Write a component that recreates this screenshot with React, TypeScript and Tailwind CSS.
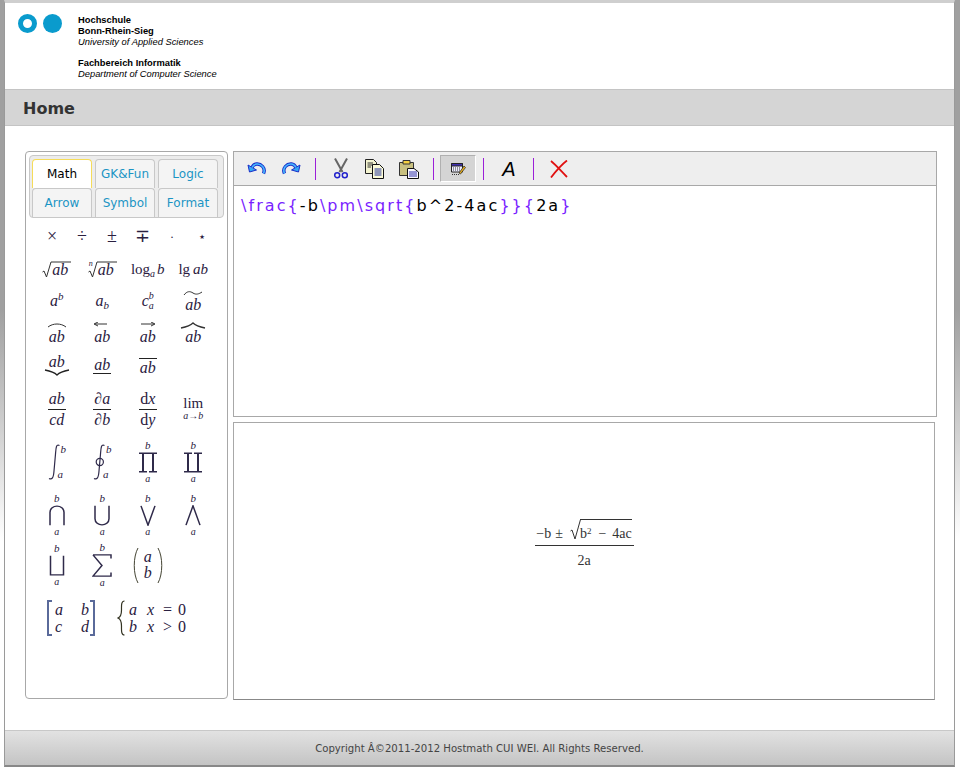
import type { ReactNode } from "react";

const serif = "font-['Liberation_Serif',serif]";

function Tab({ label, active }: { label: string; active?: boolean }) {
  return (
    <div
      className={[
        "h-[29px] rounded-t-[4px] border border-b-0 flex items-center justify-center text-[12px]",
        active ? "bg-white border-[#f5dc5a] text-black" : "bg-[#f4f4f4] border-[#c8c8c8] text-[#1c94c4]",
      ].join(" ")}
    >
      {label}
    </div>
  );
}

function Sep() {
  return <div className="w-px h-[22px] bg-[#9b1fd8] ml-[7px] mr-[8px] shrink-0" />;
}

function Cell({ children, className = "" }: { children: ReactNode; className?: string }) {
  return <div className={`flex items-center justify-center text-[#2a2040] ${serif} ${className}`}>{children}</div>;
}

function Var({ children, className = "" }: { children: ReactNode; className?: string }) {
  return <i className={className}>{children}</i>;
}

function Frac({ top, bottom }: { top: ReactNode; bottom: ReactNode }) {
  return (
    <div className="flex flex-col items-center text-[16px] leading-[16px] mt-[2px]">
      <div className="pb-[2px]">{top}</div>
      <div className="w-[18px] border-t border-[#222]" />
      <div className="pt-[2px]">{bottom}</div>
    </div>
  );
}

// big operator with limits above and below
function BigOp({ children }: { children: ReactNode }) {
  return (
    <div className="flex flex-col items-center">
      <i className="text-[11px] leading-[11px] mb-[1px]">b</i>
      {children}
      <i className="text-[10px] leading-[10px] mt-[1px]">a</i>
    </div>
  );
}

function OpSvg({ d, w = 18, h = 21, sw = 1.5 }: { d: string; w?: number; h?: number; sw?: number }) {
  return (
    <svg width={w} height={h} viewBox={`0 0 ${w} 26`} preserveAspectRatio="none" fill="none" stroke="#2f2a4a" strokeWidth={sw}>
      <path d={d} />
    </svg>
  );
}

function Radical({ w }: { w: number }) {
  return (
    <svg width={w} height="17" viewBox={`0 0 ${w} 17`} fill="none" stroke="#333" strokeWidth="1" className="shrink-0">
      <path d={`M0.5 11 L2 10 L4.5 16 L9 1 L${w} 1`} />
    </svg>
  );
}

function Accent({ d, w = 20, sw = 1 }: { d: string; w?: number; sw?: number }) {
  return (
    <div className="flex flex-col items-center">
      <svg width={w} height="7" viewBox={`0 0 ${w} 7`} fill="none" stroke="#333" strokeWidth={sw}>
        <path d={d} />
      </svg>
      <i className="leading-[15px] text-[16px]">ab</i>
    </div>
  );
}

function Integral({ contour }: { contour?: boolean }) {
  return (
    <div className="flex items-start h-[36px]">
      <svg width="13" height="36" viewBox="0 0 13 36" fill="none" stroke="#2f2a4a" strokeWidth="1.2">
        <path d="M11.5 1.5 C8 0 8 4 7.5 10 L6 27 C5.5 34 4 36 1 34.5" />
        {contour && <circle cx="6.8" cy="18" r="3.6" />}
      </svg>
      <div className="flex flex-col justify-between h-[36px] text-[11px] leading-[11px] italic">
        <span>b</span>
        <span className="-ml-[3px]">a</span>
      </div>
    </div>
  );
}

function Symbols() {
  return (
    <div className="flex flex-col">
      {/* operators */}
      <div className="grid grid-cols-[repeat(6,30px)] h-[22px] ml-[8px] mt-[5px] text-[18px]">
        {["×", "÷", "±", "∓"].map(s => (
          <Cell key={s}>{s}</Cell>
        ))}
        <Cell className="text-[12px]">·</Cell>
        <Cell className="text-[13px]">⋆</Cell>
      </div>

      <div className="grid grid-cols-[repeat(4,45.5px)] ml-[5px] mt-[8px] text-[16px] auto-rows-[32px]">
        <Cell>
          <div className="relative flex items-end">
            <Radical w={29} />
            <Var className="absolute left-[10px] top-[1px] text-[16px] leading-[16px]">ab</Var>
          </div>
        </Cell>
        <Cell>
          <div className="relative flex items-end">
            <Radical w={29} />
            <Var className="absolute left-[1px] -top-[1px] text-[8px] leading-[8px]">n</Var>
            <Var className="absolute left-[10px] top-[1px] text-[16px] leading-[16px]">ab</Var>
          </div>
        </Cell>
        <Cell className="text-[15px]">
          log<Var className="text-[10px] relative top-[4px]">a</Var>
          <Var className="ml-[2px]">b</Var>
        </Cell>
        <Cell className="text-[15px]">
          lg<Var className="ml-[3px]">ab</Var>
        </Cell>

        <Cell>
          <Var>a</Var>
          <Var className="text-[11px] relative -top-[5px]">b</Var>
        </Cell>
        <Cell>
          <Var>a</Var>
          <Var className="text-[11px] relative top-[4px]">b</Var>
        </Cell>
        <Cell>
          <Var>c</Var>
          <div className="flex flex-col text-[10px] leading-[10px] italic">
            <span>b</span>
            <span>a</span>
          </div>
        </Cell>
        <Cell>
          <Accent d="M1 5 C4 1 7 1 10 3 C13 5 16 4 19 2" />
        </Cell>

        <Cell>
          <Accent d="M1 5 C6 1 14 1 19 5" />
        </Cell>
        <Cell>
          <Accent d="M15 2 L3 2 M6 0 L2 2 L6 4" />
        </Cell>
        <Cell>
          <Accent d="M3 2 L16 2 M13 0 L17 2 L13 4" />
        </Cell>
        <Cell>
          <Accent w={26} d="M1 6 C6 5 10 4 13 1 C16 4 20 5 25 6" sw={1.4} />
        </Cell>

        <Cell>
          <div className="flex flex-col items-center">
            <Var className="leading-[14px]">ab</Var>
            <svg width="26" height="7" viewBox="0 0 26 7" fill="none" stroke="#222" strokeWidth="1.3">
              <path d="M1 1 C6 2 10 3 13 6 C16 3 20 2 25 1" />
            </svg>
          </div>
        </Cell>
        <Cell>
          <div className="border-b border-[#222] leading-[15px] px-[1px] pb-[1px]">
            <Var>ab</Var>
          </div>
        </Cell>
        <Cell>
          <div className="border-t border-[#222] leading-[15px] px-[1px] pt-[1px] mt-[2px]">
            <Var>ab</Var>
          </div>
        </Cell>
        <div />
      </div>

      <div className="grid grid-cols-[repeat(4,45.5px)] grid-rows-[54px_54px_52px_48px] ml-[5px]">
        <Cell>
          <Frac top={<Var>ab</Var>} bottom={<Var>cd</Var>} />
        </Cell>
        <Cell>
          <Frac top={<Var>∂a</Var>} bottom={<Var>∂b</Var>} />
        </Cell>
        <Cell>
          <Frac
            top={
              <span>
                d<Var>x</Var>
              </span>
            }
            bottom={
              <span>
                d<Var>y</Var>
              </span>
            }
          />
        </Cell>
        <Cell>
          <div className="flex flex-col items-center text-[15px] leading-[15px]">
            <span>lim</span>
            <Var className="text-[10px] leading-[10px]">a→b</Var>
          </div>
        </Cell>

        <Cell>
          <Integral />
        </Cell>
        <Cell>
          <Integral contour />
        </Cell>
        <Cell>
          <BigOp>
            <OpSvg sw={2} d="M0 1.5 L18 1.5 M4 2 L4 24 M14 2 L14 24 M0 24.5 L8 24.5 M10 24.5 L18 24.5" />
          </BigOp>
        </Cell>
        <Cell>
          <BigOp>
            <OpSvg sw={2} d="M0 24.5 L18 24.5 M4 2 L4 24 M14 2 L14 24 M0 1.5 L8 1.5 M10 1.5 L18 1.5" />
          </BigOp>
        </Cell>

        <Cell>
          <BigOp>
            <OpSvg d="M2 25 L2 9 C2 -1 16 -1 16 9 L16 25" />
          </BigOp>
        </Cell>
        <Cell>
          <BigOp>
            <OpSvg d="M2 1 L2 17 C2 27 16 27 16 17 L16 1" />
          </BigOp>
        </Cell>
        <Cell>
          <BigOp>
            <OpSvg d="M2 1 L9 25 L16 1" />
          </BigOp>
        </Cell>
        <Cell>
          <BigOp>
            <OpSvg d="M2 25 L9 1 L16 25" />
          </BigOp>
        </Cell>

        <Cell>
          <BigOp>
            <OpSvg w={16} d="M1.5 1 L1.5 24.5 L14.5 24.5 L14.5 1" />
          </BigOp>
        </Cell>
        <Cell>
          <BigOp>
            <OpSvg w={20} h={23} d="M1 1 L19 1 L19 5 M1 1 L10 13 L1 25 L19 25 L19 21" />
          </BigOp>
        </Cell>
        <Cell>
          <svg width="7" height="37" viewBox="0 0 7 37" fill="none" stroke="#443" strokeWidth="1">
            <path d="M6 1 C1 10 1 27 6 36" />
          </svg>
          <div className="flex flex-col items-center gap-[2px] text-[16px] leading-[14px] mx-[5px] italic">
            <span>a</span>
            <span>b</span>
          </div>
          <svg width="7" height="37" viewBox="0 0 7 37" fill="none" stroke="#443" strokeWidth="1">
            <path d="M1 1 C6 10 6 27 1 36" />
          </svg>
        </Cell>
        <div />
      </div>

      {/* matrix + cases */}
      <div className="flex items-center ml-[18px] mt-[11px] text-[#2a2040] text-[16px]">
        <div className={`flex items-center ${serif}`}>
          <div className="w-[5px] h-[36px] border-2 border-r-0 border-[#5a6a9a]" />
          <div className="grid grid-cols-[8px_8px] gap-x-[18px] gap-y-[3px] leading-[14px] italic pl-[3px] pr-[1px]">
            <span>a</span>
            <span>b</span>
            <span>c</span>
            <span>d</span>
          </div>
          <div className="w-[5px] h-[36px] border-2 border-l-0 border-[#5a6a9a]" />
        </div>
        <div className={`flex items-center ml-[22px] ${serif}`}>
          <svg width="8" height="36" viewBox="0 0 8 36" fill="none" stroke="#332" strokeWidth="1.2" className="shrink-0">
            <path d="M7.5 1 C4 1 4.5 6 4.5 10 C4.5 15 3.5 17 1 18 C3.5 19 4.5 21 4.5 26 C4.5 30 4 35 7.5 35" />
          </svg>
          <div className="grid grid-cols-[18px_10px_21px_6px] gap-y-[3px] leading-[14px] ml-[4px]">
            <i>a</i>
            <i>x</i>
            <span className="text-center">=</span>
            <span>0</span>
            <i>b</i>
            <i>x</i>
            <span className="text-center">&gt;</span>
            <span>0</span>
          </div>
        </div>
      </div>
    </div>
  );
}

function ToolButton({ children, className = "" }: { children: ReactNode; className?: string }) {
  return <button className={`w-[34px] h-[28px] flex items-center justify-center shrink-0 ${className}`}>{children}</button>;
}

function Toolbar() {
  return (
    <div className="h-[34px] bg-[#eeeeee] border-b border-[#a8a8a8] flex items-center pl-[6px] shrink-0">
      <ToolButton>
        <svg width="20" height="15" viewBox="0 0 20 15" fill="none">
          <path d="M16.5 12.5 C19 7 14 2.5 9.5 3 C7.5 3.2 6 4.5 5 6.5" stroke="#1a2ec8" strokeWidth="3.4" />
          <path d="M1 4 L2.5 11 L9.5 9 Z" fill="#35a8f5" stroke="#1a2ec8" strokeWidth="1" />
          <path d="M16.5 12.5 C19 7 14 2.5 9.5 3 C7.5 3.2 6 4.5 5 6.5" stroke="#45b8ff" strokeWidth="1.6" />
        </svg>
      </ToolButton>
      <ToolButton>
        <svg width="20" height="15" viewBox="0 0 20 15" fill="none">
          <path d="M3.5 12.5 C1 7 6 2.5 10.5 3 C12.5 3.2 14 4.5 15 6.5" stroke="#1a2ec8" strokeWidth="3.4" />
          <path d="M19 4 L17.5 11 L10.5 9 Z" fill="#35a8f5" stroke="#1a2ec8" strokeWidth="1" />
          <path d="M3.5 12.5 C1 7 6 2.5 10.5 3 C12.5 3.2 14 4.5 15 6.5" stroke="#45b8ff" strokeWidth="1.6" />
        </svg>
      </ToolButton>
      <Sep />
      <ToolButton>
        <svg width="16" height="21" viewBox="0 0 16 21" fill="none">
          <path d="M2 0.5 L9.5 14 M14 0.5 L6.5 14" stroke="#666" strokeWidth="2" />
          <circle cx="4.2" cy="17.3" r="2.5" stroke="#2222cc" strokeWidth="1.5" />
          <circle cx="11.8" cy="17.3" r="2.5" stroke="#2222cc" strokeWidth="1.5" />
        </svg>
      </ToolButton>
      <ToolButton>
        <svg width="20" height="20" viewBox="0 0 20 20">
          <path d="M0.5 0.5 H8.5 L11.5 3.5 V14.5 H0.5 Z" fill="#f4f4d0" stroke="#222" />
          <path d="M2.5 4 H8 M2.5 6 H8 M2.5 8 H6" stroke="#333" strokeWidth="1" />
          <path d="M7.5 5.5 H14.5 L18.5 9.5 V19.5 H7.5 Z" fill="#fbfbd8" stroke="#111" />
          <path d="M9.5 10 H16.5 M9.5 12 H16.5 M9.5 14 H16.5 M9.5 16 H16.5" stroke="#223399" strokeWidth="1" />
        </svg>
      </ToolButton>
      <ToolButton>
        <svg width="20" height="20" viewBox="0 0 20 20">
          <path d="M0.5 3.5 H14.5 V16.5 H0.5 Z" fill="#c8c080" stroke="#333" />
          <path d="M4 1.5 H11 V5 H4 Z" fill="#f5d040" stroke="#333" />
          <path d="M8.5 9.5 H15 L19.5 13 V19.5 H8.5 Z" fill="#f8f8ff" stroke="#111" />
          <path d="M10 13 H18 M10 15 H18 M10 17 H18" stroke="#3333aa" strokeWidth="1" />
        </svg>
      </ToolButton>
      <Sep />
      <div className="w-[36px] h-[27px] -ml-[2px] shrink-0 bg-[#d4d4d4] border border-t-[#b0b0b0] border-l-[#b0b0b0] border-r-white border-b-white flex items-center justify-center">
        <svg width="16" height="16" viewBox="0 0 16 16">
          <path d="M1.5 2.5 H12.5 V11 H1.5 Z" fill="#eef" stroke="#222" />
          <path d="M1.5 2.5 H12.5 V5 H1.5 Z" fill="#4030b0" stroke="#222" />
          <path d="M3 7 H10 M3 9 H10 M2 13.5 H10" stroke="#333" strokeDasharray="1 1" />
          <path d="M9 12 L14 5 L15.5 6.5 L10.5 13 Z" fill="#e8b020" stroke="#222" strokeWidth=".7" />
        </svg>
      </div>
      <Sep />
      <ToolButton className="font-['Liberation_Sans',sans-serif] italic text-[20px] text-black">A</ToolButton>
      <Sep />
      <ToolButton>
        <svg width="18" height="18" viewBox="0 0 18 18" fill="none" stroke="#e01010" strokeWidth="1.8">
          <path d="M1 1 C6 5 12 12 17 17 M17 0.5 C11 5 6 11 1 17.5" />
        </svg>
      </ToolButton>
    </div>
  );
}

export default function App() {
  return (
    <div className="w-[960px] h-[773px] bg-gradient-to-b from-[#a0a0a0] from-40% to-white to-70% font-['DejaVu_Sans',sans-serif] overflow-hidden">
      <div className="w-[951px] h-[767px] ml-[4px] bg-white flex flex-col border-t-[3px] border-t-[#cfcfcf] border-x border-x-[#9a9a9a] border-b-2 border-b-[#888]">
        {/* logo header */}
        <header className="h-[86px] flex shrink-0 pl-[13px] pt-[11px] font-['Liberation_Sans',sans-serif] text-black">
          <div className="flex gap-[6px] h-[19px]">
            <div className="w-[19px] h-[19px] rounded-full border-[5px] border-[#0a9bcd] bg-white" />
            <div className="w-[19px] h-[19px] rounded-full bg-[#0a9bcd]" />
          </div>
          <div className="ml-[16px] mt-[1px] text-[9.35px] leading-[11px]">
            <div className="font-bold">Hochschule</div>
            <div className="font-bold">Bonn-Rhein-Sieg</div>
            <div className="italic">University of Applied Sciences</div>
            <div className="font-bold mt-[10px]">Fachbereich Informatik</div>
            <div className="italic">Department of Computer Science</div>
          </div>
        </header>

        <div className="h-[37px] shrink-0 bg-[#d5d5d5] border-y border-[#c4c4c4] flex items-center pl-[18px] pt-[2px] text-[16px] font-bold text-[#333]">
          Home
        </div>

        <main className="flex-1 flex pl-[20px] pt-[25px]">
          {/* palette */}
          <div className="w-[203px] h-[548px] border border-[#a8a8a8] rounded-[4px] p-[3px] mr-[5px] shrink-0">
            <div className="bg-[#ececec] border border-[#c8c8c8] rounded-[4px] pl-[2px] pt-[3px] grid grid-cols-[repeat(3,60px)] gap-x-[3px]">
              <Tab label="Math" active />
              <Tab label="GK&Fun" />
              <Tab label="Logic" />
              <Tab label="Arrow" />
              <Tab label="Symbol" />
              <Tab label="Format" />
            </div>
            <Symbols />
          </div>

          <div className="flex flex-col w-[704px] shrink-0">
            {/* editor */}
            <div className="h-[266px] border border-[#a8a8a8] flex flex-col">
              <Toolbar />
              <div className="px-[7px] py-[8px] text-[16px] tracking-[2.07px] leading-[24px] text-black">
                <span className="text-[#7a1fff]">\frac{"{"}</span>-b
                <span className="text-[#7a1fff]">\pm\sqrt{"{"}</span>b^2-4ac
                <span className="text-[#7a1fff]">{"}}{"}</span>2a
                <span className="text-[#7a1fff]">{"}"}</span>
              </div>
            </div>

            {/* rendered output */}
            <div className={`mt-[5px] h-[278px] w-[702px] border border-[#a8a8a8] border-b-[#888] flex items-center justify-center text-[#333] ${serif} text-[14px]`}>
              <div className="flex flex-col items-center mb-[34px]">
                <div className="flex items-end justify-center w-[99px] pb-[3px] leading-[16px]">
                  <span>−b</span>
                  <span className="ml-[4px]">±</span>
                  <svg width="11" height="22" viewBox="0 0 11 22" fill="none" stroke="#333" strokeWidth="1" className="shrink-0 ml-[7px] mb-[1px]">
                    <path d="M0.5 12 L2 11 L5 20 L10.5 0.5" />
                  </svg>
                  <span className="border-t border-[#333] pt-[6px] -ml-[1px] whitespace-nowrap">
                    b<sup className="text-[9px] leading-none">2</sup>
                    <span className="ml-[7px]">−</span>
                    <span className="ml-[6px]">4ac</span>
                  </span>
                </div>
                <div className="w-[99px] border-t border-[#333]" />
                <div className="pt-[7px] leading-[16px]">2a</div>
              </div>
            </div>
          </div>
        </main>

        <footer className="h-[35px] shrink-0 bg-gradient-to-b from-[#e2e2e2] to-[#c4c4c4] border-t border-[#c8c8c8] flex items-center justify-center pt-[1px] text-[10.15px] text-[#444]">
          Copyright Â©2011-2012 Hostmath CUI WEI. All Rights Reserved.
        </footer>
      </div>
    </div>
  );
}
